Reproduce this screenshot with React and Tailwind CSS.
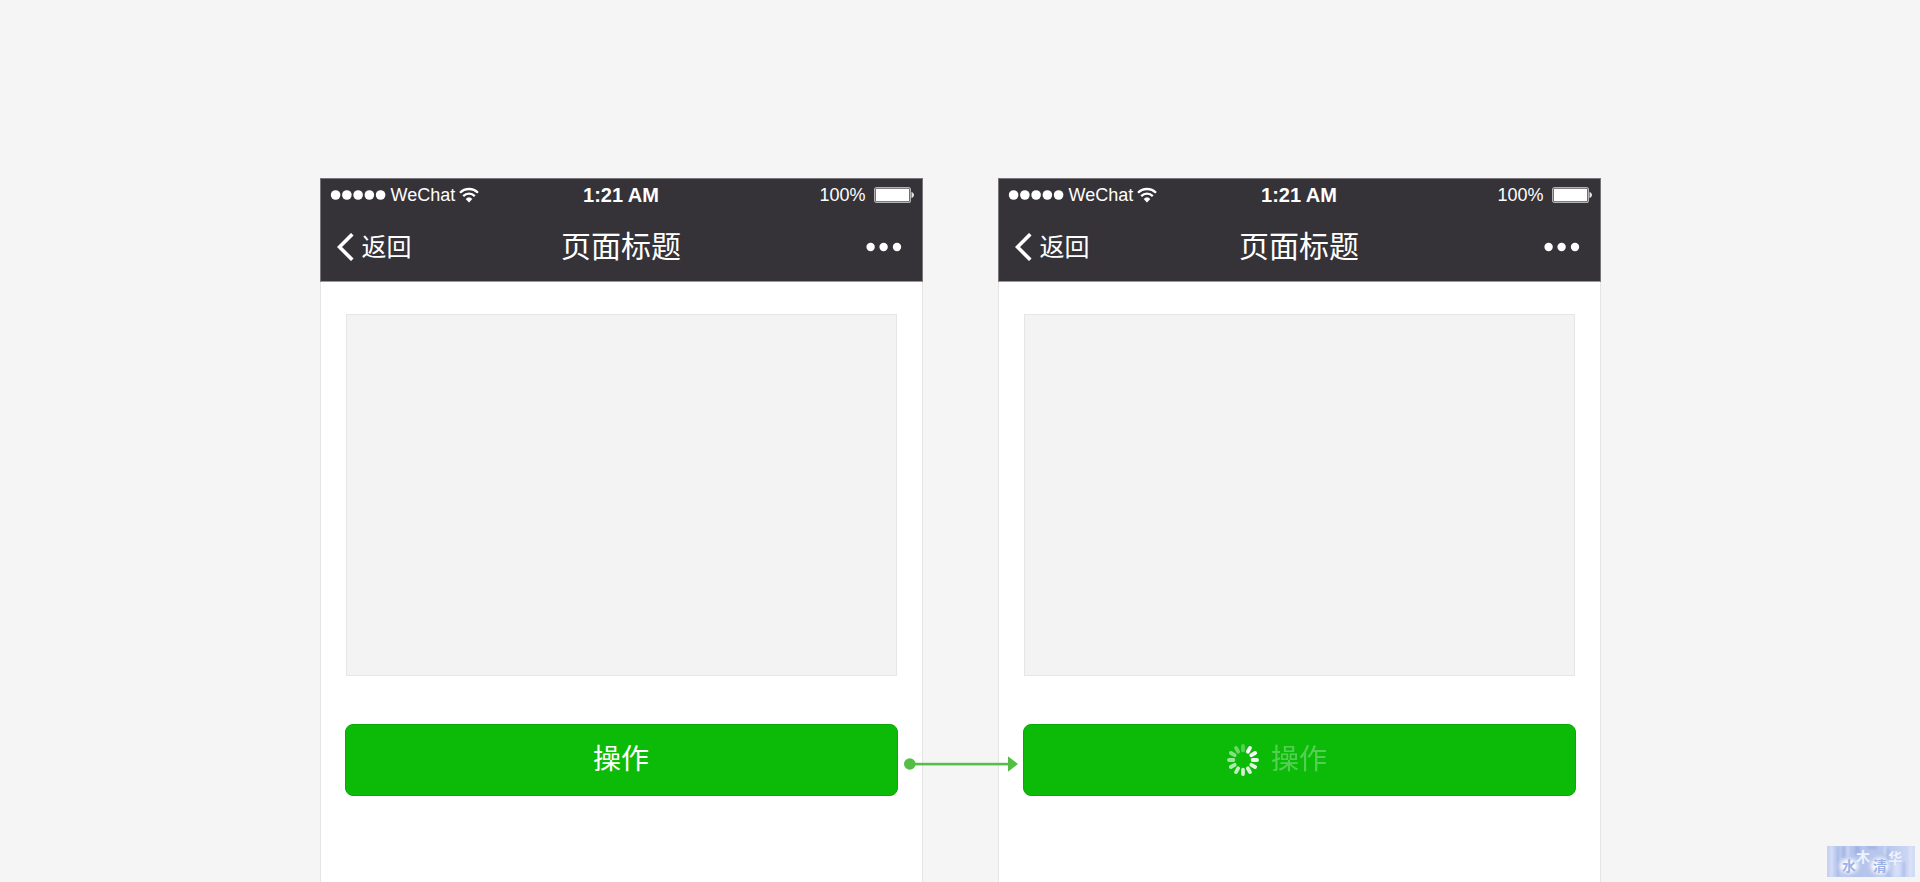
import clsx from "clsx";

const SPOKES = [0.3, 1, 0.98, 0.92, 0.88, 0.84, 0.8, 0.74, 0.68, 0.6, 0.5, 0.4];

export default function App() {
    return (
        <div className="relative min-h-screen flex flex-col bg-[#f5f5f5] pt-[178px] overflow-hidden font-['Liberation_Sans','Noto_Sans_CJK_SC',sans-serif]">
            <main className="relative flex-1 flex justify-center gap-[75px]">
                <Phone />
                <Phone loading />
                <FlowArrow />
            </main>
            <Watermark />
        </div>
    );
}

function Phone({ loading = false }) {
    return (
        <section className="w-[603px] flex flex-col bg-white border-x border-[#e5e5e5]">
            <header className="-mx-px h-[104px] bg-[#353238] text-white border border-[#77757a] border-b-[#98979b]">
                <StatusBar />
                <NavBar />
            </header>

            <div className="flex flex-col px-6 pt-8">
                <div className="mx-px h-[362px] bg-[#f3f3f3] border border-[#e6e6e6]"></div>
                <ActionButton loading={loading} />
            </div>
        </section>
    );
}

function StatusBar() {
    return (
        <div className="h-[34px] grid grid-cols-3 items-center px-2 pb-0.5">
            <div className="flex items-center gap-1 text-lg leading-6">
                <SignalDots />
                <span className="pl-px">WeChat</span>
                <WifiIcon />
            </div>
            <span className="text-center text-xl leading-6 font-bold">1:21 AM</span>
            <div className="flex items-center justify-end gap-2 text-lg leading-6">
                <span>100%</span>
                <BatteryIcon />
            </div>
        </div>
    );
}

function NavBar() {
    return (
        <nav className="h-[68px] grid grid-cols-3 items-center px-4">
            <button type="button" className="flex items-center gap-2 justify-self-start text-[25px] leading-8">
                <svg width="17" height="28" viewBox="1 0 17 28" fill="none" stroke="currentColor" strokeWidth="3.6" aria-hidden="true">
                    <path d="M16.3 1.2 3.5 14l12.8 12.8" />
                </svg>
                返回
            </button>
            <h1 className="text-center text-[30px] leading-10">页面标题</h1>
            <button type="button" aria-label="更多" className="justify-self-end">
                <svg width="40" height="10" viewBox="0 0 40 10" fill="currentColor" aria-hidden="true">
                    <circle cx="4.6" cy="5" r="4.2" />
                    <circle cx="17.6" cy="5" r="4.2" />
                    <circle cx="31" cy="5" r="4.2" />
                </svg>
            </button>
        </nav>
    );
}

function ActionButton({ loading }) {
    return (
        <button
            type="button"
            disabled={loading}
            className="mt-12 h-[72px] grid grid-cols-[1fr_auto_1fr] items-center gap-3 rounded-lg border border-[#0ca80a] bg-[#0bbb08] text-white text-[28px] leading-10"
        >
            <span className="flex justify-end">{loading && <Spinner />}</span>
            <span className={clsx(loading && "opacity-30")}>操作</span>
        </button>
    );
}

function SignalDots() {
    return (
        <svg width="57" height="10" viewBox="0 0 57 10" fill="currentColor" aria-hidden="true">
            {[0, 1, 2, 3, 4].map((i) => (
                <circle key={i} cx={6.6 + i * 11.25} cy="5" r="4.8" />
            ))}
        </svg>
    );
}

function WifiIcon() {
    return (
        <svg width="20" height="16" viewBox="0 0 20 16" fill="none" stroke="currentColor" strokeWidth="2.3" aria-hidden="true">
            <path d="M1 5.7a12.8 12.8 0 0 1 18 0" />
            <path d="M4.2 9.1a8.2 8.2 0 0 1 11.6 0" />
            <path d="M10 15.4 6.7 11.9a4.8 4.8 0 0 1 6.6 0z" fill="currentColor" stroke="none" />
        </svg>
    );
}

function BatteryIcon() {
    return (
        <svg width="40" height="16" viewBox="0 0 40 16" aria-hidden="true">
            <rect x="0.6" y="0.6" width="35.8" height="14.8" rx="2" fill="none" stroke="#b4b3b6" strokeWidth="1.2" />
            <rect x="1.8" y="1.8" width="33.4" height="12.4" rx="0.8" fill="#fff" />
            <path d="M37.5 4.8c1.6.8 2.5 1.9 2.5 3.2s-.9 2.4-2.5 3.2z" fill="#e4e4e5" />
        </svg>
    );
}

function Spinner() {
    return (
        <svg width="32" height="32" viewBox="0 0 32 32" stroke="#fff" strokeWidth="3.8" strokeLinecap="round" aria-hidden="true">
            {SPOKES.map((opacity, i) => (
                <line key={i} x1="16" y1="2" x2="16" y2="6.4" opacity={opacity} transform={`rotate(${i * 30} 16 16)`} />
            ))}
        </svg>
    );
}

// connects the normal button to its loading state
function FlowArrow() {
    return (
        <svg className="absolute left-1/2 top-[578px] -translate-x-1/2" width="116" height="16" viewBox="0 0 116 16" fill="#55be45" aria-hidden="true">
            <circle cx="7.8" cy="8" r="5.8" />
            <rect x="10" y="6.8" width="98" height="2.6" />
            <path d="M106 .3 116 8l-10 7.7z" />
        </svg>
    );
}

function Watermark() {
    return (
        <svg
            className="absolute right-[5px] bottom-[5px] font-['Noto_Sans_CJK_SC',sans-serif] font-bold"
            width="88"
            height="31"
            viewBox="0 0 88 31"
            role="img"
            aria-label="水木清华"
        >
            <defs>
                <linearGradient id="wm" x1="0" x2="1">
                    <stop offset="0" stopColor="#c6d2f2" />
                    <stop offset="0.3" stopColor="#b4c3eb" />
                    <stop offset="0.7" stopColor="#bac8ee" />
                    <stop offset="1" stopColor="#d2dcf6" />
                </linearGradient>
                <filter id="soft" x="-20%" y="-20%" width="140%" height="140%">
                    <feGaussianBlur stdDeviation="1" />
                </filter>
                <filter id="glow" x="-50%" y="-50%" width="200%" height="200%">
                    <feGaussianBlur stdDeviation="2" />
                </filter>
            </defs>
            <rect width="88" height="31" fill="url(#wm)" />
            <g fill="#8fa3dc" opacity="0.5" filter="url(#soft)">
                <rect x="10" width="2" height="31" />
                <rect x="15" width="3" height="12" />
                <rect x="28" width="5" height="9" />
                <rect x="40" width="10" height="3" />
                <rect x="60" y="3" width="2" height="28" />
                <rect x="76" y="16" width="2" height="15" />
            </g>
            <g fill="#e3eafb" opacity="0.6" filter="url(#soft)">
                <rect x="3" width="3" height="31" />
                <rect x="20" width="2" height="10" />
                <rect x="57" width="2" height="8" />
                <rect x="66" y="17" width="7" height="14" />
                <rect x="82" width="3" height="31" />
            </g>
            <g fill="#fff" filter="url(#glow)">
                <ellipse cx="22" cy="20" rx="9" ry="7" />
                <ellipse cx="53" cy="20" rx="9" ry="8" />
            </g>
            <g fontSize="14">
                <text x="15" y="25" fill="#9db1e9">水</text>
                <text x="29" y="16" fill="#edf3fe">木</text>
                <text x="46" y="25" fill="#9db1e9">清</text>
                <text x="61" y="17" fill="#edf3fe">华</text>
            </g>
        </svg>
    );
}
